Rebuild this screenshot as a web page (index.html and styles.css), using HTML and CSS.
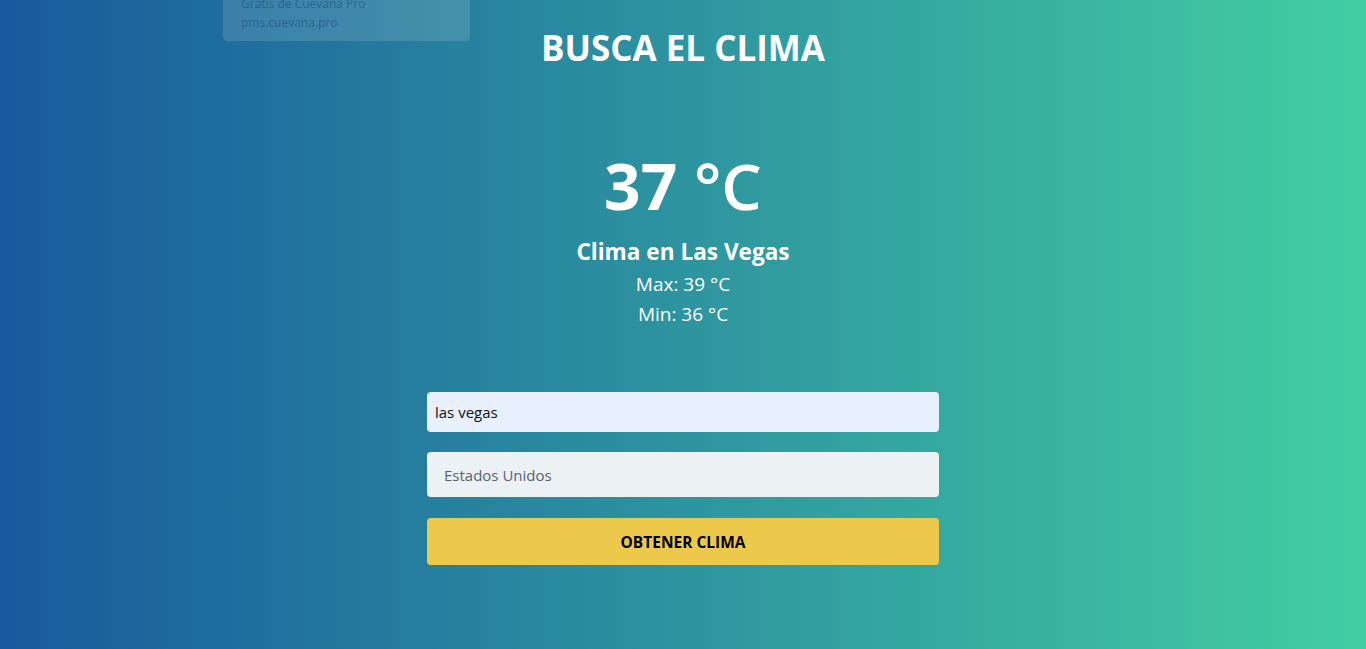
FILE: index.html
```html
<!DOCTYPE html>
<html lang="es">
<head>
<meta charset="utf-8">
<title>Busca el clima</title>
<link rel="stylesheet" href="styles.css">
</head>
<body>
<div class="popup">
  <div class="popup-title">Gratis de Cuevana Pro</div>
  <div class="popup-url">pms.cuevana.pro</div>
</div>
<main class="app">
  <h1 class="title">BUSCA EL CLIMA</h1>
  <section class="weather">
    <p class="temp">37 <span class="unit">°C</span></p>
    <p class="city">Clima en Las Vegas</p>
    <p class="range">Max: 39 °C</p>
    <p class="range">Min: 36 °C</p>
  </section>
  <form class="form">
    <input class="field field-city" type="text" value="las vegas">
    <input class="field field-country" type="text" placeholder="Estados Unidos">
    <button class="btn" type="button">OBTENER CLIMA</button>
  </form>
</main>
</body>
</html>
```
FILE: styles.css
```css
html, body {
  margin: 0;
  height: 100%;
}
body {
  background: linear-gradient(to right, #185a9d, #43cea2);
  font-family: "Open Sans", "Noto Sans", sans-serif;
  color: #fff;
  overflow: hidden;
}
.popup {
  position: absolute;
  left: 223px;
  top: -12px;
  width: 247px;
  height: 53px;
  border-radius: 4px;
  background: rgba(255, 255, 255, 0.13);
  box-sizing: border-box;
  padding: 6px 18px;
  font-size: 12px;
  line-height: 19px;
  color: rgba(20, 70, 120, 0.55);
}
.app {
  width: 512px;
  margin: 0 auto;
  padding-top: 26px;
  display: flex;
  flex-direction: column;
  align-items: stretch;
  text-align: center;
}
.title {
  margin: 0;
  font-size: 35px;
  line-height: 43px;
  font-weight: 700;
}
.weather {
  margin-top: 76px;
}
.weather p {
  margin: 0;
}
.temp {
  font-size: 64px;
  line-height: 82px;
  font-weight: 700;
}
.unit {
  font-weight: 600;
}
.city {
  margin-top: 10px !important;
  font-size: 22.6px;
  line-height: 29px;
  font-weight: 700;
}
.range {
  font-size: 19px;
  line-height: 30px;
}
.city + .range {
  margin-top: 3px !important;
}
.form {
  margin-top: 63px;
  display: flex;
  flex-direction: column;
}
.field {
  border: none;
  border-radius: 4px;
  font-family: inherit;
  font-size: 15px;
  color: #111;
  outline: none;
  box-sizing: border-box;
}
.field-city {
  height: 40px;
  padding: 0 8px;
  background: #e8f0fe;
}
.field-country {
  margin-top: 20px;
  height: 45px;
  padding: 0 17px;
  background: #ecf1f4;
}
.field-country::placeholder {
  color: #5a6270;
}
.btn {
  margin-top: 21px;
  height: 47px;
  border: none;
  border-radius: 4px;
  background: #ecc94b;
  font-family: inherit;
  font-size: 15.5px;
  font-weight: 700;
  color: #000;
}
```
